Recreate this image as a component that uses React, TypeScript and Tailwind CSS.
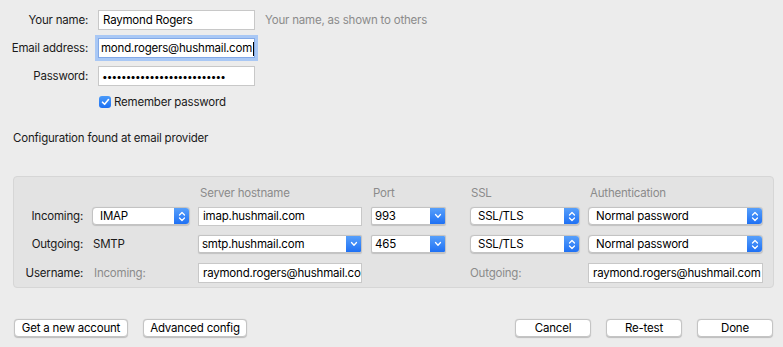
import React from "react";

const font = { fontFamily: "Inter, 'Liberation Sans', sans-serif" };

function Chevrons({ double }: { double: boolean }) {
  return double ? (
    <svg width="8" height="11" viewBox="0 0 8 11" fill="none" stroke="white" strokeWidth="1.3" strokeLinecap="round" strokeLinejoin="round">
      <path d="M1.5 4 L4 1.5 L6.5 4" />
      <path d="M1.5 7 L4 9.5 L6.5 7" />
    </svg>
  ) : (
    <svg width="8" height="6" viewBox="0 0 8 6" fill="none" stroke="white" strokeWidth="1.3" strokeLinecap="round" strokeLinejoin="round">
      <path d="M1.5 1.5 L4 4.2 L6.5 1.5" />
    </svg>
  );
}

function Select({ value, w, double = true, square = false }: { value: string; w: string; double?: boolean; square?: boolean }) {
  return (
    <div
      className={`${w} h-[18px] flex items-stretch bg-white border border-[#c3c3c3] ${square ? "rounded-[2px]" : "rounded-[4px]"} shadow-[0_0.5px_1px_rgba(0,0,0,0.15)] overflow-hidden`}
    >
      <div className={`flex-1 flex items-center pt-[1px] ${square ? "pl-[3px]" : "pl-[7px]"} text-black leading-none`}>{value}</div>
      <div className="w-[16px] flex items-center justify-center bg-gradient-to-b from-[#5aa2fb] to-[#1a6df3] -my-px -mr-px rounded-r-[4px]">
        <Chevrons double={double} />
      </div>
    </div>
  );
}

function Input({ value, w, h = "h-[20px]" }: { value: string; w: string; h?: string }) {
  return (
    <div className={`${w} ${h} flex items-center pt-[1px] bg-white border border-[#c8c8c8] pl-[4px] text-black overflow-hidden whitespace-nowrap leading-none`}>
      {value}
    </div>
  );
}

function Button({ label, w }: { label: string; w: string }) {
  return (
    <div className={`${w} h-[18px] flex items-center justify-center pt-[1px] bg-white border border-[#c4c4c4] rounded-[4px] shadow-[0_0.5px_1px_rgba(0,0,0,0.2)] text-black leading-none`}>
      {label}
    </div>
  );
}

export default function App() {
  return (
    <div className="w-[783px] h-[347px] bg-[#ececec] overflow-hidden text-[11.5px] tracking-[-0.2px] text-[#1a1a1a]" style={font}>
      <div className="pt-[10px]">
        <div className="flex items-center h-[20px]">
          <div className="w-[88px] text-right pt-[2px]">Your name:</div>
          <div className="ml-[10px]"><Input value="Raymond Rogers" w="w-[157px]" /></div>
          <div className="ml-[10px] pt-[1px] text-[#8b8b8b]">Your name, as shown to others</div>
        </div>
        <div className="flex items-center h-[20px] mt-[8px]">
          <div className="w-[88px] text-right pt-[2px]">Email address:</div>
          <div className="ml-[10px] relative">
            <div className="w-[157px] h-[20px] flex items-center pt-[1px] bg-white border border-[#83a9e6] ring-[3px] ring-[#a9c8f5] pl-[2px] text-black overflow-hidden whitespace-nowrap leading-none">
              mond.rogers@hushmail.com
              <span className="inline-block w-px h-[14px] bg-black ml-[1px]" />
            </div>
          </div>
        </div>
        <div className="flex items-center h-[20px] mt-[8px]">
          <div className="w-[88px] text-right pt-[2px]">Password:</div>
          <div className="ml-[10px]">
            <div className="w-[157px] h-[20px] flex items-center bg-white border border-[#c8c8c8] pl-[3px] text-[10px] text-black overflow-hidden whitespace-nowrap leading-none tracking-[-0.9px]">
              ••••••••••••••••••••••••••
            </div>
          </div>
        </div>
        <div className="flex items-center h-[14px] mt-[9px] ml-[99px]">
          <div className="w-[12px] h-[12px] rounded-[3px] bg-gradient-to-b from-[#4a9af9] to-[#1b6ff3] flex items-center justify-center">
            <svg width="9" height="8" viewBox="0 0 9 8" fill="none" stroke="white" strokeWidth="1.6" strokeLinecap="round" strokeLinejoin="round">
              <path d="M1.5 4.2 L3.6 6.3 L7.5 1.5" />
            </svg>
          </div>
          <div className="ml-[3px] pt-[1px]">Remember password</div>
        </div>
        <div className="ml-[13px] mt-[22px] h-[14px] flex items-center pt-[1px]">Configuration found at email provider</div>
      </div>

      <div className="ml-[13px] mt-[31px] w-[761px] h-[112px] bg-[#e3e3e3] border border-[#d6d6d6] rounded-[4px]">
        <div className="flex items-center h-[16px] mt-[8px] pt-[2px] text-[#8b8b8b]">
          <div className="ml-[186px] w-[173px]">Server hostname</div>
          <div className="w-[98px]">Port</div>
          <div className="w-[119px]">SSL</div>
          <div>Authentication</div>
        </div>
        <div className="flex items-center h-[20px] mt-[5px]">
          <div className="w-[69px] text-right pt-[2px]">Incoming:</div>
          <div className="ml-[9px]"><Select value="IMAP" w="w-[98px]" /></div>
          <div className="ml-[8px]"><Input value="imap.hushmail.com" w="w-[164px]" h="h-[19px]" /></div>
          <div className="ml-[9px]"><Select value="993" w="w-[75px]" double={false} square /></div>
          <div className="ml-[24px]"><Select value="SSL/TLS" w="w-[110px]" /></div>
          <div className="ml-[8px]"><Select value="Normal password" w="w-[175px]" /></div>
        </div>
        <div className="flex items-center h-[20px] mt-[8px]">
          <div className="w-[69px] text-right pt-[2px]">Outgoing:</div>
          <div className="ml-[10px] w-[97px] pt-[1px]">SMTP</div>
          <div className="ml-[8px]"><Select value="smtp.hushmail.com" w="w-[164px]" double={false} square /></div>
          <div className="ml-[9px]"><Select value="465" w="w-[75px]" double={false} square /></div>
          <div className="ml-[24px]"><Select value="SSL/TLS" w="w-[110px]" /></div>
          <div className="ml-[8px]"><Select value="Normal password" w="w-[175px]" /></div>
        </div>
        <div className="flex items-center h-[20px] mt-[9px]">
          <div className="w-[69px] text-right pt-[2px]">Username:</div>
          <div className="ml-[11px] w-[96px] pt-[2px] text-[#8b8b8b]">Incoming:</div>
          <div className="ml-[8px]"><Input value="raymond.rogers@hushmail.com" w="w-[164px]" /></div>
          <div className="ml-[108px] w-[110px] pt-[2px] text-[#8b8b8b]">Outgoing:</div>
          <div className="ml-[8px]"><Input value="raymond.rogers@hushmail.com" w="w-[175px]" /></div>
        </div>
      </div>

      <div className="flex items-center mt-[31px]">
        <div className="ml-[14px]"><Button label="Get a new account" w="w-[114px]" /></div>
        <div className="ml-[15px]"><Button label="Advanced config" w="w-[104px]" /></div>
        <div className="ml-[268px]"><Button label="Cancel" w="w-[76px]" /></div>
        <div className="ml-[15px]"><Button label="Re-test" w="w-[76px]" /></div>
        <div className="ml-[15px]"><Button label="Done" w="w-[76px]" /></div>
      </div>
    </div>
  );
}
